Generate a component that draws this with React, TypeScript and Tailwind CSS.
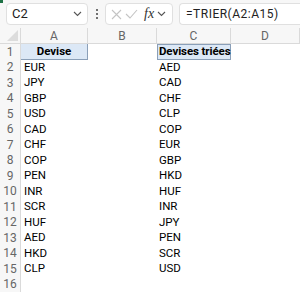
import React from 'react'

const colA = ['EUR', 'JPY', 'GBP', 'USD', 'CAD', 'CHF', 'COP', 'PEN', 'INR', 'SCR', 'HUF', 'AED', 'HKD', 'CLP']
const colC = ['AED', 'CAD', 'CHF', 'CLP', 'COP', 'EUR', 'GBP', 'HKD', 'HUF', 'INR', 'JPY', 'PEN', 'SCR', 'USD']

function Chevron() {
  return (
    <svg width="9" height="6" viewBox="0 0 9 6" fill="none" stroke="#555" strokeWidth="1.1">
      <path d="M1 1l3.5 3.5L8 1" />
    </svg>
  )
}

export default function App() {
  const rows = Array.from({ length: 16 }, (_, i) => i + 1)
  return (
    <div className="relative w-[300px] h-[292px] overflow-hidden bg-white font-['Roboto',sans-serif] text-black">
      {/* ribbon corner */}
      <div className="absolute left-0 top-0 w-[3px] h-[3px] bg-[#1e7145]" />

      {/* Formula bar */}
      <div className="flex items-center h-[28px] bg-[#f7f7f7]">
        <div className="ml-[6px] w-[82px] h-[22px] flex items-center justify-between pl-[5px] pr-[5px] bg-white border border-[#e0e0e0] rounded-[4px]">
          <span className="text-[13px] text-[#222]">C2</span>
          <Chevron />
        </div>
        <div className="w-[17px] flex flex-col items-center gap-[2px]">
          <span className="w-[2px] h-[2px] bg-[#444] rounded-full" />
          <span className="w-[2px] h-[2px] bg-[#444] rounded-full" />
          <span className="w-[2px] h-[2px] bg-[#444] rounded-full" />
        </div>
        <div className="w-[68px] h-[22px] flex items-center gap-[3px] pl-[5px] bg-white border border-[#e0e0e0] rounded-[4px]">
          <svg width="11" height="11" viewBox="0 0 11 11" stroke="#c4c4c4" strokeWidth="1.1">
            <path d="M1 1l9 9M10 1l-9 9" />
          </svg>
          <svg width="13" height="10" viewBox="0 0 13 10" fill="none" stroke="#c4c4c4" strokeWidth="1.1">
            <path d="M1 5l4 4 7-8" />
          </svg>
          <span className="ml-[3px] font-['Liberation_Serif',serif] italic text-[14px] text-[#333] leading-none">fx</span>
          <Chevron />
        </div>
        <div className="ml-[6px] flex-1 h-[22px] flex items-center pl-[6px] bg-white border border-[#e0e0e0] rounded-l-[4px] border-r-0">
          <span className="text-[12px] tracking-[0.5px] text-[#222]">=TRIER(A2:A15)</span>
        </div>
      </div>

      {/* Grid */}
      <div className="grid grid-cols-[21px_67px_69px_74px_1fr] grid-rows-[16px_repeat(16,15.5px)] text-[11px]">
        {/* header row */}
        <div className="relative bg-[#f7f7f7] border-r border-b border-[#dadada]">
          <div className="absolute right-[2px] bottom-[2px] w-0 h-0 border-l-[11px] border-l-transparent border-b-[11px] border-b-[#dcdcdc]" />
        </div>
        {['A', 'B', 'C', 'D'].map((c) => (
          <div key={c} className="flex items-center justify-center bg-[#f7f7f7] border-r border-b border-[#dadada] text-[#666] text-[12px]">
            {c}
          </div>
        ))}

        {rows.map((r) => (
          <React.Fragment key={r}>
            <div className="flex items-center justify-center bg-[#f7f7f7] border-r border-[#dadada] text-[#666] text-[12px]">
              {r}
            </div>
            {r === 1 ? (
              <>
                <div className="flex items-center justify-center bg-[#dce8f6] border-r border-b border-[#8a9fb8] font-bold text-[11.5px]">Devise</div>
                <div />
                <div className="flex items-center pl-[1px] bg-[#dce8f6] border border-[#8a9fb8] font-bold text-[11.5px] tracking-[-0.1px] whitespace-nowrap">
                  Devises triées
                </div>
                <div />
              </>
            ) : (
              <>
                <div className="flex items-center pl-[3px] text-[11.5px]">{colA[r - 2] ?? ''}</div>
                <div />
                <div className="flex items-center pl-[2px] text-[11.5px]">{colC[r - 2] ?? ''}</div>
                <div />
              </>
            )}
          </React.Fragment>
        ))}
      </div>
    </div>
  )
}
